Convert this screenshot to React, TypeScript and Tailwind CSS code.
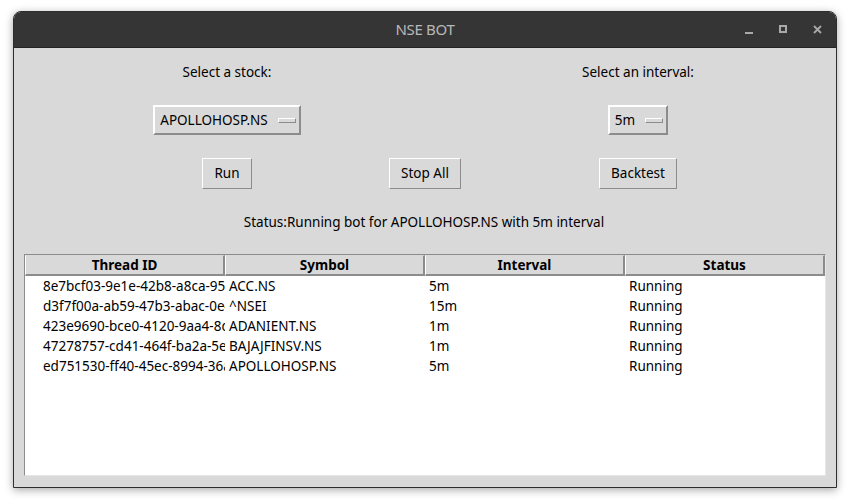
import React from 'react';

interface BotThread {
  id: string;
  symbol: string;
  interval: string;
  status: string;
}

const threads: BotThread[] = [
  { id: '8e7bcf03-9e1e-42b8-a8ca-95c1d2f0a7b3', symbol: 'ACC.NS', interval: '5m', status: 'Running' },
  { id: 'd3f7f00a-ab59-47b3-abac-0e4f1a9c2d10', symbol: '^NSEI', interval: '15m', status: 'Running' },
  { id: '423e9690-bce0-4120-9aa4-8d2b7e61c0f5', symbol: 'ADANIENT.NS', interval: '1m', status: 'Running' },
  { id: '47278757-cd41-464f-ba2a-5e0c3b9d8a41', symbol: 'BAJAJFINSV.NS', interval: '1m', status: 'Running' },
  { id: 'ed751530-ff40-45ec-8994-36a2f7c1e9b8', symbol: 'APOLLOHOSP.NS', interval: '5m', status: 'Running' },
];

const columns = ['Thread ID', 'Symbol', 'Interval', 'Status'];

function OptionMenu({ value }: { value: string }) {
  return (
    <div className="flex items-center h-[30px] pl-[5px] pr-[3px] bg-[#d9d9d9] border-2 border-t-white border-l-white border-b-[#8c8c8c] border-r-[#8c8c8c]">
      <span className="text-[13.5px] text-black mr-[10px]">{value}</span>
      <span className="w-[18px] h-[5px] bg-[#d9d9d9] border border-t-white border-l-white border-b-[#8c8c8c] border-r-[#8c8c8c]" />
    </div>
  );
}

function TkButton({ label }: { label: string }) {
  return (
    <button className="h-[31px] px-[11px] text-[13.5px] text-black bg-[#d9d9d9] border border-t-white border-l-white border-b-[#8c8c8c] border-r-[#8c8c8c]">
      {label}
    </button>
  );
}

export default function App() {
  return (
    <div className="w-[850px] h-[503px] bg-white pt-[11px] pl-[13px]" style={{ fontFamily: '"Noto Sans", "Open Sans", sans-serif' }}>
      <div className="w-[824px] h-[477px] flex flex-col rounded-t-[8px] border border-[#2e2e2e] bg-[#d9d9d9] shadow-[0_2px_8px_rgba(0,0,0,0.35)] overflow-hidden">
        {/* title bar */}
        <div className="h-[36px] shrink-0 bg-[#353535] border-b border-[#242424] flex items-center relative">
          <div className="flex-1 text-center text-[15px] text-[#b8b8b8] tracking-[-0.3px]">NSE BOT</div>
          <div className="absolute right-[14px] top-[13px] flex items-center gap-[25px]">
            <svg width="9" height="9" viewBox="0 0 9 9"><rect x="0" y="7" width="8" height="2" fill="#a9a9a9" /></svg>
            <svg width="9" height="9" viewBox="0 0 9 9"><rect x="1" y="1" width="6" height="6" fill="none" stroke="#a9a9a9" strokeWidth="2" /></svg>
            <svg width="9" height="9" viewBox="0 0 9 9"><path d="M1 1 L8 8 M8 1 L1 8" stroke="#a9a9a9" strokeWidth="1.8" /></svg>
          </div>
        </div>

        {/* controls */}
        <div className="flex pt-[15px] pl-[123px]">
          <div className="w-[180px] flex flex-col items-center">
            <div className="h-[18px] text-[13.5px] text-black leading-[18px]">Select a stock:</div>
            <div className="mt-[24px]"><OptionMenu value="APOLLOHOSP.NS" /></div>
            <div className="mt-[23px]"><TkButton label="Run" /></div>
          </div>
          <div className="w-[180px] ml-[18px] flex flex-col items-center">
            <div className="h-[18px]" />
            <div className="h-[30px] mt-[24px]" />
            <div className="mt-[23px]"><TkButton label="Stop All" /></div>
          </div>
          <div className="w-[180px] ml-[33px] flex flex-col items-center">
            <div className="h-[18px] text-[13.5px] text-black leading-[18px]">Select an interval:</div>
            <div className="mt-[24px]"><OptionMenu value="5m" /></div>
            <div className="mt-[23px]"><TkButton label="Backtest" /></div>
          </div>
        </div>

        <div className="mt-[24px] text-center text-[13.5px] text-black leading-[18px] pr-[2px]">
          Status:Running bot for APOLLOHOSP.NS with 5m interval
        </div>

        {/* table */}
        <div className="mt-[23px] mx-[10px] mb-[11px] flex-1 flex flex-col bg-white border border-t-[#8c8c8c] border-l-[#8c8c8c] border-b-[#e6e6e6] border-r-[#e6e6e6]">
          <div className="flex h-[21px] bg-[#d9d9d9]">
            {columns.map((c) => (
              <div key={c} className="w-[200px] flex items-center justify-center text-[13.5px] font-bold text-black border-l border-t border-l-white border-t-[#d9d9d9] border-r-2 border-b-2 border-r-[#8c8c8c] border-b-[#8c8c8c]">
                {c}
              </div>
            ))}
          </div>
          <div>
            {threads.map((t) => (
              <div key={t.id} className="flex h-[20px] items-center text-[13.5px] text-black">
                <div className="w-[200px] pl-[18px] pr-[2px] overflow-hidden whitespace-nowrap">{t.id}</div>
                <div className="w-[200px] pl-[4px] overflow-hidden whitespace-nowrap">{t.symbol}</div>
                <div className="w-[200px] pl-[4px] overflow-hidden whitespace-nowrap">{t.interval}</div>
                <div className="w-[200px] pl-[4px] overflow-hidden whitespace-nowrap">{t.status}</div>
              </div>
            ))}
          </div>
        </div>
      </div>
    </div>
  );
}
